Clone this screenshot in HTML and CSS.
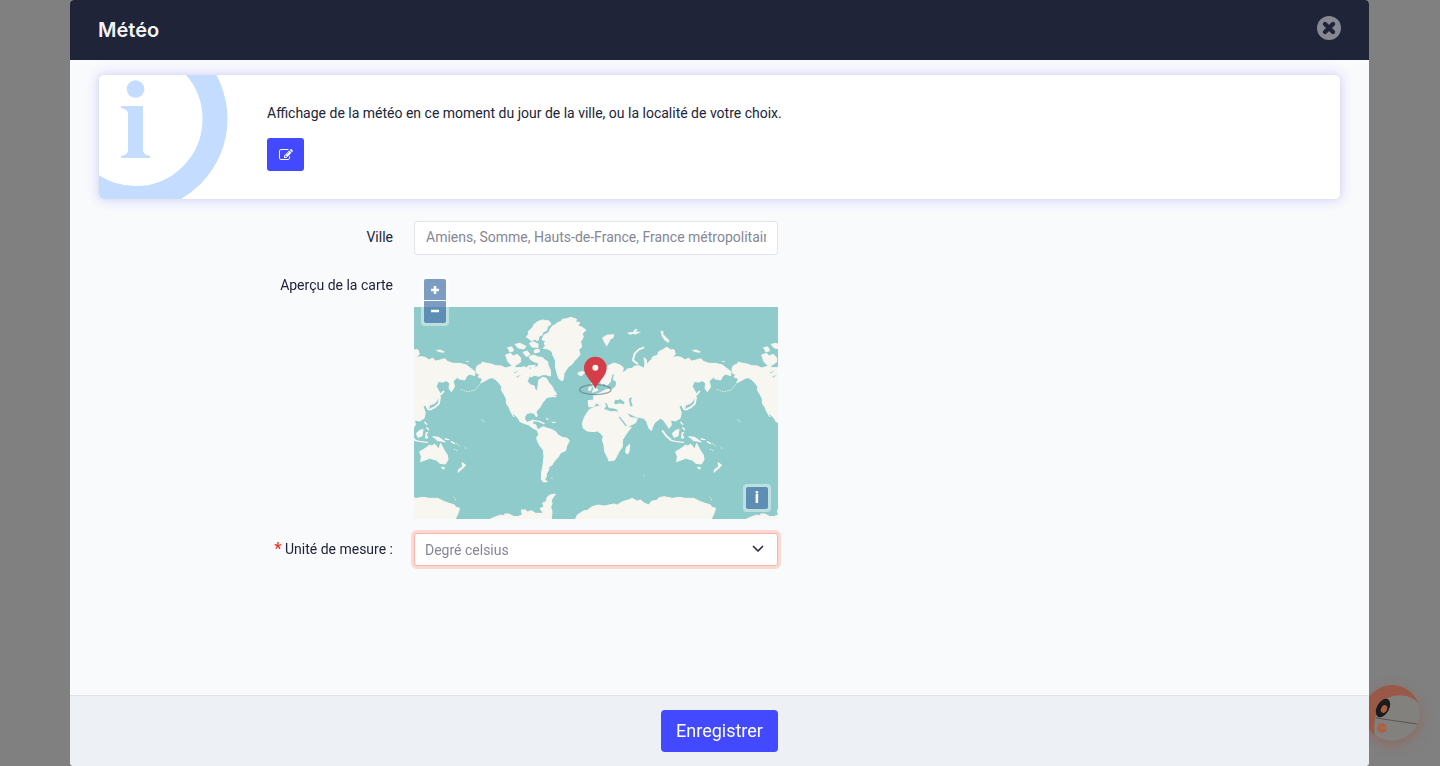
FILE: index.html
```
<!DOCTYPE html>
<html lang="fr">
<head>
<meta charset="utf-8">
<meta name="viewport" content="width=device-width, initial-scale=1">
<title>Météo</title>
<link rel="stylesheet" href="styles.css">
</head>
<body>
<div class="assistant" aria-hidden="true">
  <svg viewBox="0 0 56 56" width="56" height="56">
    <defs><clipPath id="disc"><circle cx="28" cy="28" r="28"/></clipPath></defs>
    <g clip-path="url(#disc)">
      <rect width="56" height="56" fill="#9a5848"/>
      <path d="M12 56C8 42 11 27 18 18C24 10 44 5 56 20V56Z" fill="#82817d"/>
      <path d="M12 33L53 39" stroke="#565553" fill="none"/>
      <ellipse cx="19" cy="23" rx="6" ry="10" transform="rotate(30 19 23)" fill="#1b1b1d"/>
      <ellipse cx="20" cy="24" rx="3" ry="4" transform="rotate(25 20 24)" fill="#a85c40"/>
      <circle cx="18" cy="43" r="5" fill="#ac6145"/>
      <path d="M19 43h4M18 41v2" stroke="#82817d"/>
    </g>
  </svg>
</div>
<div class="backdrop">
  <section class="modal" role="dialog" aria-labelledby="title">
    <header class="modal-header">
      <h1 class="modal-title" id="title">Météo</h1>
      <button class="close" type="button" aria-label="Fermer">
        <svg viewBox="0 0 24 24" width="24" height="24"><circle cx="12" cy="12" r="12" fill="#868892"/><path d="M8 8L16 16M16 8L8 16" stroke="#202439" stroke-width="4.4" stroke-linecap="round"/></svg>
      </button>
    </header>
    <main class="modal-body">
      <div class="info">
        <svg class="info-mark" viewBox="0 0 129 124" width="129" height="124" aria-hidden="true">
          <circle cx="36.5" cy="44" r="79.5" fill="none" stroke="#c4dcff" stroke-width="25"/>
          <circle cx="36.5" cy="14" r="8.8" fill="#c4dcff"/>
          <path d="M22 31H44V75Q44 80 51 81V83H22V81Q29 80 29 75V39Q29 34 22 33Z" fill="#c4dcff"/>
        </svg>
        <div class="info-content">
          <p class="info-text">Affichage de la météo en ce moment du jour de la ville, ou la localité de votre choix.</p>
          <button class="edit" type="button" aria-label="Modifier">
            <svg viewBox="0 0 1792 1792" width="14" height="14" fill="#fff"><path d="M888 1184l116-116-152-152-116 116v56h96v96h56zm440-720q-16-16-33 1l-350 350q-17 17-1 33t33-1l350-350q17-17 1-33zm80 594v190q0 119-84.500 203.500t-203.500 84.500h-832q-119 0-203.500-84.500t-84.500-203.500v-832q0-119 84.500-203.500t203.500-84.500h832q63 0 117 25 15 7 18 23 3 17-9 29l-49 49q-14 14-32 8-23-6-45-6h-832q-66 0-113 47t-47 113v832q0 66 47 113t113 47h832q66 0 113-47t47-113v-126q0-13 9-22l64-64q15-15 35-7t20 29zm-96-738l288 288-672 672h-288v-288zm444 132l-92 92-288-288 92-92q28-28 68-28t68 28l152 152q28 28 28 68t-28 68z"/></svg>
          </button>
        </div>
      </div>
      <form class="form" id="weather">
        <div class="row">
          <label class="label" for="city">Ville</label>
          <input class="field" id="city" type="text" value="Amiens, Somme, Hauts-de-France, France métropolitaine, France">
        </div>
        <div class="row">
          <span class="label">Aperçu de la carte</span>
          <div class="map">
            <svg class="map-view" viewBox="0 0 1092 636" role="img" aria-label="Carte du monde">
              <defs>
                <g id="world" stroke-linejoin="round">
                  <g fill="#f7f6f1" stroke="#f7f6f1" stroke-width="3">
                    <path d="M186 185L190 176 203 170 205 165 214 168 235 172 244 176 262 177 275 183 285 180 300 177 306 182 318 182 330 179 337 183 345 175 360 181 372 179 374 163 385 160 388 174 398 180 408 190 400 195 398 203 386 203 375 208 362 205 350 210 345 208 340 224 350 234 360 236 365 252 370 250 372 238 374 220 385 211 397 214 404 226 414 238 420 250 428 262 418 266 427 269 415 269 400 271 392 279 383 291 378 301 366 314 370 327 366 329 361 319 350 317 340 319 333 327 332 337 340 346 350 342 358 339 356 351 366 354 368 364 380 369 372 371 355 362 345 354 330 349 318 344 314 336 303 324 294 314 300 330 290 314 284 299 278 291 276 274 270 262 262 249 264 240 255 228 245 218 235 212 225 214 212 222 200 227 206 215 192 210 197 203 187 198Z"/>
                    <path d="M370 374L378 364 388 359 400 364 412 367 425 374 432 384 445 391 460 394 466 401 458 417 455 431 440 437 432 451 420 464 414 474 405 479 404 489 398 499 396 511 392 517 400 524 388 525 382 517 383 494 387 474 390 449 388 429 378 417 370 401 368 392 375 381Z"/>
                    <path d="M390 84L404 77 408 67 415 57 424 53 430 47 440 44 445 37 458 35 470 31 488 37 484 45 497 46 492 57 503 60 516 69 505 80 508 90 500 104 503 120 494 128 498 143 488 155 480 163 475 171 462 180 456 190 450 200 448 217 444 222 434 214 428 194 424 179 425 162 417 145 414 134 402 126 388 124 394 116 390 108 396 103 384 98Z"/>
                    <path d="M337 90L343 83 343 73 354 64 361 51 373 43 385 39 405 42 411 51 400 60 398 70 387 75 384 84 375 88 372 101 362 97 352 102 345 95ZM345 149L358 144 372 150 384 151 392 158 401 164 402 174 409 189 410 207 398 204 392 194 381 183 376 167 362 165 350 158ZM275 144L290 139 297 147 310 142 320 153 320 165 306 174 296 178 282 164ZM303 112L318 109 336 118 330 126 313 123ZM281 121L294 120 299 131 288 135ZM327 136L340 132 348 142 337 149ZM346 109L358 104 372 111 372 121 354 120ZM360 130L374 126 377 134 362 138ZM350 176L364 175 358 181Z"/>
                    <path d="M492 198L505 193 512 197 503 206 493 203ZM532 230L540 228 546 243 552 250 535 256 540 244ZM525 241L532 239 530 250 524 250Z"/>
                    <path d="M522 281L540 279 538 266 552 260 564 254 576 248 596 246 606 238 608 224 598 218 602 196 593 206 588 226 578 236 570 228 562 234 560 220 567 208 570 198 580 178 600 168 618 174 628 182 626 192 614 199 618 190 630 196 640 186 655 184 660 178 675 176 690 184 693 170 690 152 697 158 698 174 705 164 714 157 715 150 730 145 735 133 745 129 752 124 760 121 770 129 780 128 784 141 775 151 790 149 802 151 812 158 825 154 832 162 840 161 860 155 870 164 885 169 905 169 925 174 938 184 951 194 950 206 935 201 925 209 920 219 904 216 898 211 885 223 890 239 880 254 873 244 875 229 865 221 854 225 840 224 835 239 846 259 846 270 830 289 815 294 810 309 802 294 795 297 802 319 798 334 785 342 770 339 772 354 765 364 755 349 748 339 740 334 725 344 718 354 712 371 705 364 698 344 690 334 665 329 645 319 638 318 650 332 670 334 665 347 638 361 625 347 612 319 612 308 600 303 585 302 582 295 580 288 570 287 576 298 568 304 562 294 554 286 564 304 550 288 545 290 540 298 525 300Z"/>
                    <path d="M512 329L525 309 540 301 552 298 563 300 575 309 590 314 608 314 612 322 622 336 632 354 640 361 652 361 638 379 625 399 625 419 615 434 602 459 585 462 582 454 572 434 570 414 565 399 568 389 560 379 550 372 540 374 520 372 508 364 505 349Z"/>
                    <path d="M635 437L637 421 647 412 645 434 640 441ZM785 434L802 424 815 414 822 417 830 411 838 421 842 427 848 409 858 429 868 444 870 459 862 471 845 469 835 459 815 454 788 464 790 449ZM850 481L860 482 856 487ZM912 467L923 474 918 480 900 496 902 487 914 480ZM775 379L786 370 795 367 792 387 780 391ZM824 389L842 391 862 405 848 402 838 401 832 394ZM804 377L810 377 804 381 810 392 803 394Z"/>
                    <path d="M565 92L578 84 600 82 598 92 588 98 586 104 578 118 570 104ZM640 77L658 75 664 66 670 68 665 74 680 75 665 82 655 80 648 83ZM740 72L747 72 748 83 765 99 764 107 752 100 744 88ZM834 130L846 128 860 134 856 137 842 134ZM924 163L932 163 930 166ZM396 333L404 337 400 339ZM413 344L427 346 416 348Z" stroke-width="1"/>
                    <path d="M485 636L490 624 510 611 518 611 535 599 552 594 570 597 600 591 610 594 625 584 640 580 655 574 668 582 680 579 690 588 705 594 712 583 728 580 735 572 750 569 775 574 795 571 815 574 840 574 850 580 860 584 870 588 890 594 892 600 905 604 900 619 892 636ZM230 636L246 629 260 624 270 626 272 621 285 621 298 628 310 629 325 624 322 609 335 609 340 615 352 611 365 619 388 619 378 604 390 600 386 588 396 584 400 570 408 564 424 561 412 579 414 590 410 600 414 614 412 636Z"/>
                  </g>
                  <g fill="none" stroke="#f7f6f1" stroke-width="6" stroke-linecap="round">
                    <path d="M670 170L657 160 662 140 674 128 688 122M746 372L757 387 770 398M815 308L830 301 842 291 846 272M848 262L856 254"/>
                    <path stroke-width="4" d="M770 400L784 403 808 406M800 346L806 352M806 362L812 368M360 341L376 343 390 350M862 396L872 398M880 404L890 410"/>
                    <path stroke-width="2" stroke-dasharray="3 5" d="M142 248L160 254 182 250 202 227M895 409L905 417M888 427L900 432M922 422L924 427M970 338L980 344M690 505L694 508M412 513L418 514M888 570L895 582"/>
                  </g>
                  <g fill="#90cbcb">
                    <path d="M600 287L604 278 612 280 618 276 632 286 629 292 618 289 604 292ZM645 274L655 271 651 280 656 298 649 298 646 286ZM618 329L639 356 635 358 614 331Z"/>
                    <path d="M344 182L352 180 350 187ZM299 196L315 190 302 200ZM306 208L322 203 310 212ZM386 286L394 283 388 289Z" opacity=".6"/>
                  </g>
                </g>
              </defs>
              <rect width="1092" height="636" fill="#90cbcb"/>
              <use href="#world" x="-768"/>
              <use href="#world"/>
              <use href="#world" x="768"/>
              <ellipse cx="544" cy="248" rx="47" ry="15" fill="none" stroke="#62777e" stroke-opacity=".65" stroke-width="4"/>
              <path d="M544 246C538 226 510 208 510 183A34 34 0 0 1 578 183C578 208 550 226 544 246Z" fill="#d53d48"/>
              <circle cx="544" cy="182" r="9" fill="#f7f6f1"/>
            </svg>
            <div class="zoom-control">
              <button class="map-button zoom-in" type="button" aria-label="Zoom avant"><svg viewBox="0 0 8 8" width="8" height="8"><path d="M4 0V8M0 4H8" stroke="#fff" stroke-width="2.500"/></svg></button>
              <button class="map-button zoom-out" type="button" aria-label="Zoom arrière"><svg viewBox="0 0 8 8" width="8" height="8"><path d="M0 3H8" stroke="#fff" stroke-width="2.500"/></svg></button>
            </div>
            <div class="credit-control"><button class="map-button credit" type="button">i</button></div>
          </div>
        </div>
        <div class="row">
          <label class="label" for="unit"><span class="required">*</span> Unité de mesure :</label>
          <div class="select-wrap">
            <select class="field unit" id="unit"><option>Degré celsius</option><option>Degré fahrenheit</option></select>
            <svg class="chevron" viewBox="0 0 12 8" width="12" height="8" aria-hidden="true"><path d="M1.500 1.500L6 6L10.500 1.500" fill="none" stroke="#2b2e45" stroke-width="1.700" stroke-linecap="round" stroke-linejoin="round"/></svg>
          </div>
        </div>
      </form>
    </main>
    <footer class="modal-footer">
      <button class="save" type="submit" form="weather">Enregistrer</button>
    </footer>
  </section>
</div>
</body>
</html>
```
FILE: styles.css
```
* { box-sizing: border-box; }
body {
  margin: 0;
  background: #808080;
  color: #202439;
  font: 14px/20px Roboto, "Liberation Sans", sans-serif;
}
button, input, select { font: inherit; }
button { border: 0; padding: 0; cursor: pointer; }
svg { display: block; }
.backdrop { position: relative; display: flex; min-height: 100vh; padding: 0 71px 0 70px; }
.modal {
  flex: 1;
  min-width: 0;
  display: flex;
  flex-direction: column;
  overflow: hidden;
  border-radius: 4px;
  background: #f9fafc;
}
.modal-header {
  display: flex;
  align-items: center;
  justify-content: space-between;
  height: 60px;
  padding: 0 28px 4px;
  background: #202439;
}
.modal-title {
  margin: 0;
  padding-top: 4px;
  color: #f2f4f8;
  font: 600 20px/24px Inter, Roboto, sans-serif;
}
.close { border-radius: 50%; background: transparent; }
.modal-body { flex: 1; padding: 14px 28px; }
.info {
  display: flex;
  gap: 39px;
  overflow: hidden;
  border: 1px solid #e1e4ec;
  border-radius: 6px;
  background: #fff;
  box-shadow: 0 0 12px rgba(66, 66, 255, .22);
}
.info-mark { flex: none; }
.info-content { padding-top: 28px; }
.info-text { margin: 0 0 15px; }
.edit {
  display: grid;
  place-items: center;
  width: 37px;
  height: 33px;
  border-radius: 3px;
  background: #4249ff;
}
.form { display: grid; gap: 14px; margin-top: 21px; }
.row { display: grid; grid-template-columns: 295fr 364fr 542fr; gap: 21px; }
.label { padding-top: 6px; text-align: right; }
.required { color: #e8322d; font-size: 16px; font-weight: 700; line-height: 16px; }
.field {
  display: block;
  width: 100%;
  min-width: 0;
  height: 34px;
  padding: 0 11px 2px;
  border: 1px solid #e1e4ec;
  border-radius: 3px;
  outline: 0;
  background: #fff;
  color: #858795;
}
.select-wrap { position: relative; }
.unit {
  appearance: none;
  height: 33px;
  padding: 0 10px;
  border-color: #f8b4a8;
  box-shadow: 0 0 0 3px #fbd9d3;
}
.chevron { position: absolute; top: 12px; right: 14px; pointer-events: none; }
.map { position: relative; padding-top: 38px; }
.map-view { width: 100%; height: auto; }
.zoom-control, .credit-control {
  position: absolute;
  padding: 3px;
  border-radius: 4px;
  background: rgba(255, 255, 255, .4);
}
.zoom-control { display: grid; gap: 1px; top: 7px; left: 7px; }
.credit-control { right: 7px; bottom: 7px; }
.map-button {
  display: grid;
  place-items: center;
  width: 22px;
  height: 22px;
  background: rgba(0, 60, 136, .5);
  color: #fff;
  font: 700 16px/20px "Noto Sans", sans-serif;
}
.zoom-in { height: 21px; border-radius: 2px 2px 0 0; }
.zoom-out { border-radius: 0 0 2px 2px; }
.credit { padding-bottom: 2px; border-radius: 2px; }
.modal-footer {
  display: grid;
  place-items: center;
  height: 71px;
  border-top: 1px solid #e0e3e9;
  background: #edf0f5;
}
.save {
  height: 42px;
  padding: 0 15px;
  border-radius: 4px;
  background: #4249ff;
  color: #fff;
  font-size: 18px;
}
.assistant {
  position: fixed;
  right: 20px;
  bottom: 25px;
  border-radius: 50%;
  box-shadow: 0 4px 12px rgba(154, 88, 72, .5);
}
```
